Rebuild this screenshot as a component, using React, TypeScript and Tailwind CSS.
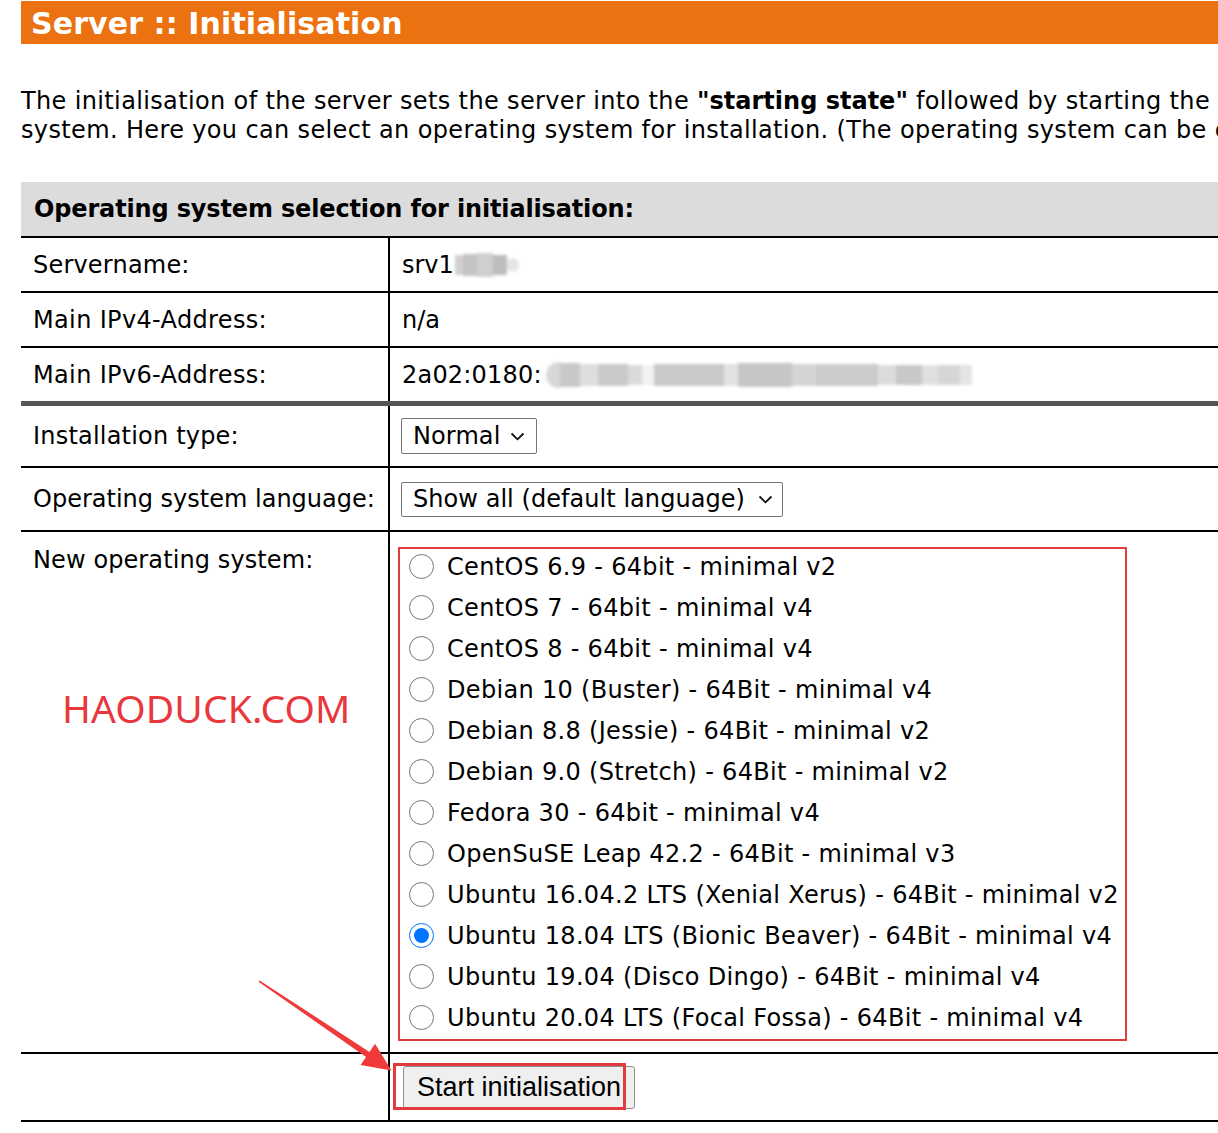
import React from "react";

const osList = [
  "CentOS 6.9 - 64bit - minimal v2",
  "CentOS 7 - 64bit - minimal v4",
  "CentOS 8 - 64bit - minimal v4",
  "Debian 10 (Buster) - 64Bit - minimal v4",
  "Debian 8.8 (Jessie) - 64Bit - minimal v2",
  "Debian 9.0 (Stretch) - 64Bit - minimal v2",
  "Fedora 30 - 64bit - minimal v4",
  "OpenSuSE Leap 42.2 - 64Bit - minimal v3",
  "Ubuntu 16.04.2 LTS (Xenial Xerus) - 64Bit - minimal v2",
  "Ubuntu 18.04 LTS (Bionic Beaver) - 64Bit - minimal v4",
  "Ubuntu 19.04 (Disco Dingo) - 64Bit - minimal v4",
  "Ubuntu 20.04 LTS (Focal Fossa) - 64Bit - minimal v4",
];

function Chevron() {
  return (
    <svg width="15" height="9" viewBox="0 0 15 9" className="shrink-0">
      <path d="M1.5 1.5 L7.5 7.3 L13.5 1.5" fill="none" stroke="#111" strokeWidth="1.8" />
    </svg>
  );
}

function Radio({ checked }: { checked?: boolean }) {
  if (checked) {
    return (
      <span className="w-[25px] h-[25px] rounded-full border-[1.5px] border-[#0075ff] bg-white flex items-center justify-center shrink-0">
        <span className="w-[15px] h-[15px] rounded-full bg-[#0075ff]" />
      </span>
    );
  }
  return <span className="w-[25px] h-[25px] rounded-full border border-[#767676] bg-white shrink-0" />;
}

export default function App() {
  return (
    <div className="relative w-[1218px] h-[1133px] overflow-hidden bg-white text-black font-['DejaVu_Sans',sans-serif] text-[24px]">
      <div className="pl-[21px] w-[1300px]">
        <div className="mt-[1px] h-[43px] bg-[#ec7111] text-white font-bold text-[30px] leading-[46px] pl-[10px] tracking-[0.1px]">
          Server :: Initialisation
        </div>

        <div className="mt-[43px] leading-[29px] whitespace-nowrap tracking-[0.36px]">
          <div>
            The initialisation of the server sets the server into the <b className="tracking-normal">"starting state"</b> followed by starting the
          </div>
          <div>
            system. Here you can select an operating system for installation. (The operating system can be changed later.)
          </div>
        </div>

        <div className="mt-[37px]">
          <div className="h-[56px] bg-[#dcdcdc] border-b-2 border-black font-bold pl-[13px] flex items-center tracking-[-0.15px]">
            Operating system selection for initialisation:
          </div>

          <div className="flex border-b-2 border-black h-[55px]">
            <div className="w-[369px] border-r-2 border-black pl-[12px] flex items-center tracking-[0.2px]">Servername:</div>
            <div className="flex-1 pl-[12px] flex items-center">
              <span>srv1</span>
              <span className="flex items-center blur-[1.5px] ml-[1px]">
                <span className="w-[8px] h-[20px] bg-[#d0d0d0]" />
                <span className="w-[14px] h-[22px] bg-[#c4c4c4]" />
                <span className="w-[16px] h-[24px] bg-[#cfcfcf]" />
                <span className="w-[14px] h-[20px] bg-[#bdbdbd]" />
                <span className="w-[12px] h-[14px] bg-[#e6e6e6] rounded-full" />
              </span>
            </div>
          </div>

          <div className="flex border-b-2 border-black h-[55px]">
            <div className="w-[369px] border-r-2 border-black pl-[12px] flex items-center tracking-[0.35px]">Main IPv4-Address:</div>
            <div className="flex-1 pl-[12px] flex items-center">n/a</div>
          </div>

          <div className="flex border-b-[5px] border-[#555555] h-[58px]">
            <div className="w-[369px] border-r-2 border-black pl-[12px] flex items-center tracking-[0.35px]">Main IPv6-Address:</div>
            <div className="flex-1 pl-[12px] flex items-center">
              <span className="tracking-[0.2px]">2a02:0180:</span>
              <span className="flex items-center blur-[1.5px] ml-[4px]">
                <span className="w-[14px] h-[26px] bg-[#d8d8d8] rounded-l-full" />
                <span className="w-[20px] h-[24px] bg-[#c8c8c8]" />
                <span className="w-[18px] h-[22px] bg-[#dedede]" />
                <span className="w-[30px] h-[22px] bg-[#cacaca]" />
                <span className="w-[14px] h-[20px] bg-[#dadada]" />
                <span className="w-[12px] h-[20px] bg-[#f2f2f2]" />
                <span className="w-[70px] h-[22px] bg-[#c9c9c9]" />
                <span className="w-[14px] h-[22px] bg-[#e2e2e2]" />
                <span className="w-[54px] h-[24px] bg-[#c6c6c6]" />
                <span className="w-[24px] h-[22px] bg-[#d4d4d4]" />
                <span className="w-[62px] h-[22px] bg-[#cbcbcb]" />
                <span className="w-[18px] h-[20px] bg-[#dcdcdc]" />
                <span className="w-[26px] h-[20px] bg-[#c8c8c8]" />
                <span className="w-[16px] h-[20px] bg-[#e0e0e0]" />
                <span className="w-[22px] h-[20px] bg-[#d6d6d6]" />
                <span className="w-[12px] h-[20px] bg-[#e4e4e4]" />
              </span>
            </div>
          </div>

          <div className="flex border-b-2 border-black h-[62px]">
            <div className="w-[369px] border-r-2 border-black pl-[12px] flex items-center tracking-[0.2px]">Installation type:</div>
            <div className="flex-1 pl-[11px] flex items-center">
              <div className="w-[136px] h-[36px] border border-[#767676] rounded-[2px] pl-[11px] pr-[11px] flex items-center justify-between tracking-[0.1px]">
                <span>Normal</span>
                <Chevron />
              </div>
            </div>
          </div>

          <div className="flex border-b-2 border-black h-[64px]">
            <div className="w-[369px] border-r-2 border-black pl-[12px] flex items-center">Operating system language:</div>
            <div className="flex-1 pl-[11px] flex items-center">
              <div className="w-[382px] h-[35px] border border-[#767676] rounded-[2px] pl-[11px] pr-[9px] flex items-center justify-between tracking-[0.05px]">
                <span>Show all (default language)</span>
                <Chevron />
              </div>
            </div>
          </div>

          <div className="flex border-b-2 border-black h-[522px]">
            <div className="w-[369px] border-r-2 border-black pl-[12px] pt-[14px] leading-[29px]">
              <div className="tracking-[0.1px]">New operating system:</div>
              <div className="mt-[107px] ml-[29px] font-['Noto_Sans',sans-serif] text-[39px] leading-[52px] text-[#e8383d] tracking-[0.1px]">
                HAODUCK.COM
              </div>
            </div>
            <div className="flex-1 pl-[8px] pt-[15px]">
              <div className="w-[729px] h-[494px] border-2 border-[#e03c40]">
                <div className="-mt-[3px] pl-[9px]">
                  {osList.map((os, i) => (
                    <div key={os} className="h-[41px] flex items-center gap-[13px] whitespace-nowrap">
                      <Radio checked={i === 9} />
                      <span className="tracking-[0.32px]">{os}</span>
                    </div>
                  ))}
                </div>
              </div>
            </div>
          </div>

          <div className="flex border-b-2 border-black h-[68px]">
            <div className="w-[369px] border-r-2 border-black" />
            <div className="flex-1 pl-[13px] pt-[12px]">
              <div className="relative w-[232px] h-[43px]">
                <button className="w-[232px] h-[43px] bg-[#efefef] border border-[#8f8f8f] rounded-[3px] font-['Liberation_Sans',Arial,sans-serif] text-[27px] leading-none text-black flex items-center justify-center">
                  Start initialisation
                </button>
                <div className="absolute left-[-10px] top-[-3px] w-[233px] h-[47px] border-[3px] border-[#e23a3e] pointer-events-none" />
              </div>
            </div>
          </div>
        </div>
      </div>

      <svg className="absolute left-0 top-0 pointer-events-none" width="1218" height="1133">
        <polygon
          points="258.5,981.8 259.6,980.4 369.5,1051.9 375,1043.8 391.5,1070.5 360.5,1065 366.1,1056.9"
          fill="#f03a3a"
        />
      </svg>
    </div>
  );
}
